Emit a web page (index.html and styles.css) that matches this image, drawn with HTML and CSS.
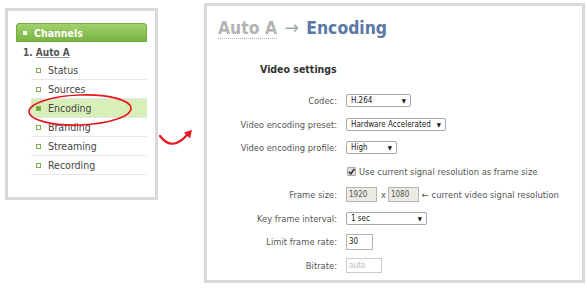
FILE: index.html
```html
<!DOCTYPE html>
<html lang="en">
<head>
  <title>Encoding - Channel Settings</title>
  <link rel="stylesheet" href="styles.css">
</head>
<body>

  <div class="page">

    <!-- Channel menu -->
    <div class="menu-panel">
      <div class="menu-head"><span class="head-square"></span>Channels</div>
      <div class="channel-name">1. <u>Auto A</u></div>
      <ul class="menu-list">
        <li><span class="bullet"></span>Status</li>
        <li><span class="bullet"></span>Sources</li>
        <li class="active"><span class="bullet"></span>Encoding</li>
        <li><span class="bullet"></span>Branding</li>
        <li><span class="bullet"></span>Streaming</li>
        <li><span class="bullet"></span>Recording</li>
      </ul>
      <svg class="circle-mark" width="106" height="34" viewBox="0 0 106 34">
        <ellipse cx="53" cy="17" rx="51" ry="15" fill="none" stroke="#e8161e" stroke-width="1.6" transform="rotate(-2 53 17)"/>
      </svg>
    </div>

    <!-- Arrow between the two shots -->
    <div class="arrow-col">
      <svg width="40" height="22" viewBox="0 0 40 22">
        <path d="M2 9 Q14 25 29 8" fill="none" stroke="#e8161e" stroke-width="2.2" stroke-linecap="round"/>
        <path d="M34 3 L26 5.5 L32 11.5 Z" fill="#e8161e"/>
      </svg>
    </div>

    <!-- Encoding page -->
    <div class="settings-panel">
      <h1 class="crumbs"><span class="crumb-link">Auto A</span> <span class="crumb-arrow">&rarr;</span> Encoding</h1>
      <h2 class="section-title">Video settings</h2>

      <div class="form-grid">
        <label>Codec:</label>
        <div><span class="select w-codec">H.264<span class="caret">&#9660;</span></span></div>

        <label>Video encoding preset:</label>
        <div><span class="select w-preset">Hardware Accelerated<span class="caret">&#9660;</span></span></div>

        <label>Video encoding profile:</label>
        <div><span class="select w-profile">High<span class="caret">&#9660;</span></span></div>

        <label></label>
        <div class="check-row">
          <span class="checkbox">
            <svg width="7" height="7" viewBox="0 0 7 7"><path d="M0.8 3.8 L2.8 5.8 L6.4 0.9" fill="none" stroke="#333" stroke-width="1.6"/></svg>
          </span>
          Use current signal resolution as frame size
        </div>

        <label>Frame size:</label>
        <div class="inline-row">
          <span class="field disabled w-frame">1920</span>
          <span class="times">x</span>
          <span class="field disabled w-frame">1080</span>
          <span class="hint">&larr; current video signal resolution</span>
        </div>

        <label>Key frame interval:</label>
        <div><span class="select w-key">1 sec<span class="caret">&#9660;</span></span></div>

        <label>Limit frame rate:</label>
        <div><span class="field w-rate">30</span></div>

        <label>Bitrate:</label>
        <div><span class="field placeholder w-bitrate">auto</span></div>
      </div>
    </div>

  </div>

</body>
</html>
```

FILE: styles.css
```css
body {
  margin: 0;
  background: #fff;
  font-family: "DejaVu Sans Condensed", "DejaVu Sans", sans-serif;
  color: #555;
}

.page {
  display: flex;
  align-items: flex-start;
}

/* left menu */
.menu-panel {
  position: relative;
  box-sizing: border-box;
  width: 153px;
  height: 192px;
  margin: 8px 0 0 5px;
  padding: 12px 8px 0 8px;
  border: 3px solid #d9d9d9;
}

.menu-head {
  display: flex;
  align-items: center;
  height: 19px;
  box-sizing: border-box;
  padding-left: 6px;
  border: 1px solid #74aa42;
  border-radius: 3px 3px 0 0;
  background: linear-gradient(#a2d16b, #79b443);
  color: #fff;
  font-weight: bold;
  font-size: 10.5px;
}

.head-square {
  width: 4px;
  height: 4px;
  margin-right: 7px;
  background: #fff;
}

.channel-name {
  padding: 2px 0 0 7px;
  line-height: 17px;
  font-size: 10px;
  font-weight: bold;
  color: #555;
}

.channel-name u {
  text-decoration-color: #999;
}

.menu-list {
  list-style: none;
  margin: 0 0 0 15px;
  padding: 0;
}

.menu-list li {
  display: flex;
  align-items: center;
  height: 18px;
  padding-left: 5px;
  border-bottom: 1px solid #e6e6e6;
  font-size: 10.5px;
  color: #444;
}

.bullet {
  box-sizing: border-box;
  width: 5px;
  height: 5px;
  margin-right: 7px;
  border: 1px solid #7fb04a;
}

.menu-list li.active {
  background: #d9efb9;
}

.menu-list li.active .bullet {
  background: #6fa33c;
}

.circle-mark {
  position: absolute;
  left: 19px;
  top: 82px;
}

/* arrow */
.arrow-col {
  width: 46px;
  padding-top: 127px;
}

/* right page */
.settings-panel {
  box-sizing: border-box;
  width: 381px;
  height: 280px;
  margin-top: 3px;
  padding: 11px 0 0 11px;
  border: 3px solid #d9d9d9;
}

.crumbs {
  margin: 0;
  font-size: 17.4px;
  line-height: 20px;
  font-weight: bold;
  color: #5a78a5;
}

.crumb-link {
  color: #b3b3b3;
  border-bottom: 1px dotted #aaa;
}

.crumb-arrow {
  margin: 0 2px;
  font-size: 19px;
  color: #a8a8a8;
  font-weight: normal;
}

.section-title {
  margin: 24px 0 0 42px;
  font-size: 10.5px;
  line-height: 14px;
  color: #333;
}

.form-grid {
  display: grid;
  grid-template-columns: 119px auto;
  grid-auto-rows: 23.5px;
  column-gap: 9px;
  align-items: center;
  margin-top: 13px;
  font-size: 9.3px;
}

.form-grid label {
  text-align: right;
}

.select {
  position: relative;
  display: inline-block;
  box-sizing: border-box;
  height: 13px;
  padding-left: 4px;
  border: 1px solid #a6a6a6;
  border-radius: 2px;
  background: #fff;
  font-size: 8px;
  line-height: 11px;
  color: #222;
  vertical-align: middle;
}

.caret {
  position: absolute;
  right: 4px;
  top: 0;
  font-size: 6px;
  color: #111;
}

.w-codec { width: 65px; }
.w-preset { width: 100px; }
.w-profile { width: 51px; }
.w-key { width: 81px; }

.check-row {
  display: flex;
  align-items: center;
  padding-left: 1px;
  color: #555;
}

.checkbox {
  display: flex;
  align-items: center;
  justify-content: center;
  box-sizing: border-box;
  width: 9px;
  height: 9px;
  margin-right: 3px;
  border: 1px solid #aaa;
  border-radius: 1px;
  background: #ddd;
}

.inline-row {
  display: flex;
  align-items: center;
}

.field {
  display: inline-block;
  box-sizing: border-box;
  height: 16px;
  padding-left: 2px;
  border: 1px solid #b5b5b5;
  background: #fff;
  font-size: 8px;
  line-height: 14px;
  color: #222;
  vertical-align: middle;
}

.field.disabled {
  height: 15px;
  line-height: 13px;
  background: #ebebe4;
  color: #555;
}

.field.placeholder {
  height: 15px;
  line-height: 13px;
  border-color: #ccc;
  color: #bbb;
}

.w-frame { width: 31px; }
.w-rate { width: 27px; }
.w-bitrate { width: 36px; }

.times {
  margin: 0 2px 0 4px;
}

.hint {
  margin-left: 3px;
}
```
